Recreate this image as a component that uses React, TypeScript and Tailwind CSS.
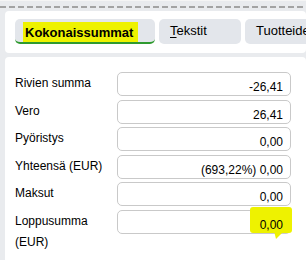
const rows = [
  { label: "Rivien summa", value: "-26,41" },
  { label: "Vero", value: "26,41" },
  { label: "Pyöristys", value: "0,00" },
  { label: "Yhteensä (EUR)", value: "(693,22%) 0,00" },
  { label: "Maksut", value: "0,00" },
  { label: "Loppusumma (EUR)", value: "0,00", marked: true },
];

export default function App() {
  return (
    <div
      className="w-[306px] h-[260px] overflow-hidden bg-[#e9ebee] text-black"
      style={{ fontFamily: '"Liberation Sans", Arial, sans-serif' }}
    >
      {/* top strip with dashed separator */}
      <div className="h-[11px] border-t border-[#f5f5f5] pt-[5px]">
        <div className="h-[2px] bg-[repeating-linear-gradient(90deg,#a3a3a3_0_6px,transparent_6px_9px)]"></div>
      </div>

      {/* tab bar */}
      <div className="ml-[5px] h-[42px] rounded-[4px] bg-white pl-[10px] pt-[8px] flex gap-[4px] overflow-hidden">
        <div className="w-[140px] h-[25px] shrink-0 rounded-[5px] bg-[#e3e6eb] border-b-2 border-[#2f9a2f] pl-[8px] pt-[1px]">
          <span className="inline-block bg-[#eef200] pl-[2px] pr-[5px] h-[20px] leading-[21px] text-[13px] font-bold">
            Kokonaissummat
          </span>
        </div>
        <div className="w-[82px] h-[25px] shrink-0 rounded-[5px] bg-[#e3e6eb] pl-[11px] leading-[24px] text-[13px]">
          <span className="underline underline-offset-2">T</span>ekstit
        </div>
        <div className="w-[90px] h-[25px] shrink-0 rounded-[5px] bg-[#e3e6eb] pl-[11px] leading-[24px] text-[13px] whitespace-nowrap">
          Tuotteideni
        </div>
      </div>

      {/* totals panel */}
      <div className="ml-[5px] mt-[4px] h-[210px] rounded-[4px] bg-white pt-[15px] pl-[10px] text-[12px]">
        <div className="flex flex-col gap-[3.6px]">
          {rows.map((r) => (
            <div key={r.label} className="flex items-start">
              <div className="w-[102px] shrink-0 pr-[4px] leading-[21px] pt-[1px]">{r.label}</div>
              <div className="relative w-[174px] h-[24px] rounded-[5px] border border-[#c9c9c9] flex items-end justify-end pr-[7px] pb-[1px] leading-[14px]">
                {r.marked && (
                  <>
                    <span className="absolute right-[-2px] top-[-4px] w-[42px] h-[26px] rounded-[3px] bg-[#eef200]"></span>
                    <span className="absolute right-[6px] top-[20px] w-[10px] h-[8px] bg-[#eef200] [clip-path:polygon(0_0,100%_0,20%_100%)]"></span>
                  </>
                )}
                <span className="relative">{r.value}</span>
              </div>
            </div>
          ))}
        </div>
      </div>
    </div>
  );
}
